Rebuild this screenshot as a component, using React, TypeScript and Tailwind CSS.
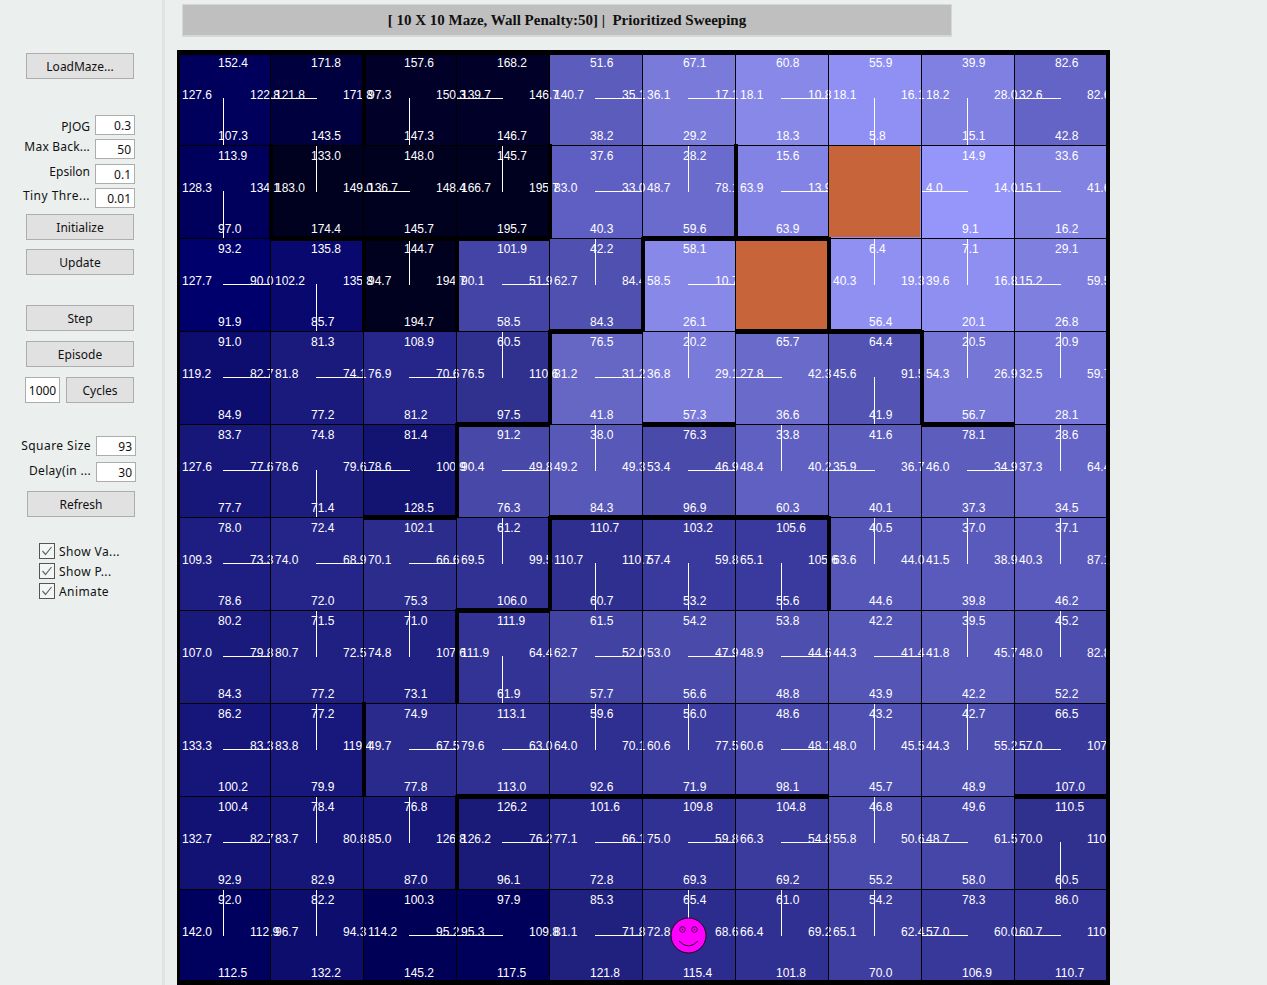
type Dir = "R" | "L" | "U" | "D"
type Cell = [string, string, string, string, Dir, string] | string

const ORANGE = "orange"

// top, left, right, bottom, policy direction, shade
const rows: Cell[][] = [
  [
    ["152.4", "127.6", "122.8", "107.3", "D", "#00005c"],
    ["171.8", "121.8", "171.8", "143.5", "L", "#00003e"],
    ["157.6", "97.3", "150.3", "147.3", "D", "#000028"],
    ["168.2", "139.7", "146.7", "146.7", "L", "#000028"],
    ["51.6", "140.7", "35.1", "38.2", "R", "#5c5cbd"],
    ["67.1", "36.1", "17.1", "29.2", "R", "#7a7adb"],
    ["60.8", "18.1", "10.8", "18.3", "R", "#8888e8"],
    ["55.9", "18.1", "16.1", "5.8", "D", "#9090f4"],
    ["39.9", "18.2", "28.0", "15.1", "D", "#8080e2"],
    ["82.6", "32.6", "82.6", "42.8", "L", "#6464c6"],
  ],
  [
    ["113.9", "128.3", "134.1", "97.0", "D", "#00005c"],
    ["133.0", "183.0", "149.0", "174.4", "U", "#00001f"],
    ["148.0", "136.7", "148.4", "145.7", "L", "#00001f"],
    ["145.7", "166.7", "195.7", "195.7", "U", "#00001f"],
    ["37.6", "83.0", "33.0", "40.3", "R", "#5f5fc3"],
    ["28.2", "48.7", "78.1", "59.6", "U", "#6b6bce"],
    ["15.6", "63.9", "13.9", "63.9", "R", "#8383e5"],
    ORANGE,
    ["14.9", "4.0", "14.0", "9.1", "L", "#9595fa"],
    ["33.6", "15.1", "41.6", "16.2", "L", "#8282e3"],
  ],
  [
    ["93.2", "127.7", "90.0", "91.9", "R", "#00006c"],
    ["135.8", "102.2", "135.8", "85.7", "D", "#08086e"],
    ["144.7", "94.7", "194.7", "194.7", "U", "#00001f"],
    ["101.9", "90.1", "51.9", "58.5", "R", "#4444a6"],
    ["42.2", "62.7", "84.4", "84.3", "U", "#5050b0"],
    ["58.1", "58.5", "10.7", "26.1", "R", "#8888e8"],
    ORANGE,
    ["6.4", "40.3", "19.3", "56.4", "U", "#9090f3"],
    ["7.1", "39.6", "16.8", "20.1", "U", "#8f8ff1"],
    ["29.1", "15.2", "59.5", "26.8", "L", "#7f7fe0"],
  ],
  [
    ["91.0", "119.2", "82.7", "84.9", "R", "#0d0d70"],
    ["81.3", "81.8", "74.1", "77.2", "R", "#1a1a7c"],
    ["108.9", "76.9", "70.6", "81.2", "R", "#25258a"],
    ["60.5", "76.5", "110.6", "97.5", "U", "#30308f"],
    ["76.5", "81.2", "31.2", "41.8", "R", "#6666c5"],
    ["20.2", "36.8", "29.1", "57.3", "U", "#7a7adb"],
    ["65.7", "27.8", "42.3", "36.6", "L", "#6a6acb"],
    ["64.4", "45.6", "91.5", "41.9", "D", "#5353b4"],
    ["20.5", "54.3", "26.9", "56.7", "U", "#7676d7"],
    ["20.9", "32.5", "59.7", "28.1", "U", "#7676d8"],
  ],
  [
    ["83.7", "127.6", "77.6", "77.7", "R", "#17177a"],
    ["74.8", "78.6", "79.6", "71.4", "D", "#1d1d80"],
    ["81.4", "78.6", "100.9", "128.5", "L", "#131372"],
    ["91.2", "90.4", "49.8", "76.3", "R", "#4848a9"],
    ["38.0", "49.2", "49.3", "84.3", "U", "#5858b9"],
    ["76.3", "53.4", "46.9", "96.9", "R", "#4a4aab"],
    ["33.8", "48.4", "40.2", "60.3", "U", "#6060c2"],
    ["41.6", "35.9", "36.7", "40.1", "L", "#5c5cbd"],
    ["78.1", "46.0", "34.9", "37.3", "R", "#5d5dbe"],
    ["28.6", "37.3", "64.4", "34.5", "U", "#6565c7"],
  ],
  [
    ["78.0", "109.3", "73.3", "78.6", "R", "#1e1e82"],
    ["72.4", "74.0", "68.9", "72.0", "R", "#252589"],
    ["102.1", "70.1", "66.6", "75.3", "R", "#2c2c8d"],
    ["61.2", "69.5", "99.5", "106.0", "U", "#313193"],
    ["110.7", "110.7", "110.7", "60.7", "D", "#2f2f90"],
    ["103.2", "57.4", "59.8", "53.2", "D", "#3a3a9e"],
    ["105.6", "65.1", "105.6", "55.6", "D", "#3a3a9e"],
    ["40.5", "63.6", "44.0", "44.6", "U", "#5656b8"],
    ["37.0", "41.5", "38.9", "39.8", "U", "#5a5abc"],
    ["37.1", "40.3", "87.1", "46.2", "U", "#5a5abc"],
  ],
  [
    ["80.2", "107.0", "79.8", "84.3", "R", "#1a1a7c"],
    ["71.5", "80.7", "72.5", "77.2", "U", "#202083"],
    ["71.0", "74.8", "107.6", "73.1", "U", "#212184"],
    ["111.9", "111.9", "64.4", "61.9", "D", "#333395"],
    ["61.5", "62.7", "52.0", "57.7", "R", "#4242a3"],
    ["54.2", "53.0", "47.9", "56.6", "R", "#4a4aab"],
    ["53.8", "48.9", "44.6", "48.8", "R", "#4e4eaf"],
    ["42.2", "44.3", "41.4", "43.9", "R", "#5555b6"],
    ["39.5", "41.8", "45.7", "42.2", "U", "#5858b9"],
    ["45.2", "48.0", "82.8", "52.2", "U", "#4d4dae"],
  ],
  [
    ["86.2", "133.3", "83.3", "100.2", "R", "#15157a"],
    ["77.2", "83.8", "119.4", "79.9", "U", "#18187c"],
    ["74.9", "49.7", "67.5", "77.8", "R", "#2a2a8c"],
    ["113.1", "79.6", "63.0", "113.0", "R", "#303092"],
    ["59.6", "64.0", "70.1", "92.6", "U", "#2f2f91"],
    ["56.0", "60.6", "77.5", "71.9", "U", "#3c3c9f"],
    ["48.6", "60.6", "48.1", "98.1", "R", "#4646a8"],
    ["43.2", "48.0", "45.5", "45.7", "U", "#5050b2"],
    ["42.7", "44.3", "55.2", "48.9", "U", "#4e4eaf"],
    ["66.5", "57.0", "107.0", "107.0", "L", "#39399c"],
  ],
  [
    ["100.4", "132.7", "82.7", "92.9", "R", "#121275"],
    ["78.4", "83.7", "80.8", "82.9", "U", "#161679"],
    ["76.8", "85.0", "126.8", "87.0", "U", "#17177a"],
    ["126.2", "126.2", "76.2", "96.1", "R", "#1a1a78"],
    ["101.6", "77.1", "66.1", "72.8", "R", "#28288a"],
    ["109.8", "75.0", "59.8", "69.3", "R", "#313193"],
    ["104.8", "66.3", "54.8", "69.2", "R", "#3b3b9d"],
    ["46.8", "55.8", "50.6", "55.2", "U", "#4a4aac"],
    ["49.6", "48.7", "61.5", "58.0", "L", "#4646a8"],
    ["110.5", "70.0", "110.5", "60.5", "D", "#30308f"],
  ],
  [
    ["92.0", "142.0", "112.9", "112.5", "U", "#00005f"],
    ["82.2", "96.7", "94.3", "132.2", "U", "#0d0d6d"],
    ["100.3", "114.2", "95.2", "145.2", "R", "#000056"],
    ["97.9", "95.3", "109.8", "117.5", "L", "#00005a"],
    ["85.3", "81.1", "71.8", "121.8", "R", "#20207f"],
    ["65.4", "72.8", "68.6", "115.4", "U", "#2c2c8e"],
    ["61.0", "66.4", "69.2", "101.8", "U", "#303092"],
    ["54.2", "65.1", "62.4", "70.0", "U", "#3e3ea0"],
    ["78.3", "57.0", "60.0", "106.9", "L", "#38389a"],
    ["86.0", "60.7", "110.7", "110.7", "L", "#333395"],
  ],
]

// walls inside the maze: [row, col] on the top edge / left edge of that cell
const topWalls = [
  [2, 1], [2, 2], [2, 3], [2, 5], [2, 6],
  [3, 4], [3, 6], [3, 7],
  [4, 3], [4, 5], [4, 8],
  [5, 2], [5, 4], [5, 5], [5, 6],
  [6, 3],
  [8, 3], [8, 4], [8, 5], [8, 6], [8, 9],
]
const leftWalls = [
  [0, 2],
  [1, 1], [1, 4], [1, 6],
  [2, 2], [2, 3], [2, 5], [2, 7],
  [3, 4], [3, 8],
  [4, 3],
  [5, 4], [5, 7],
  [6, 3],
  [7, 2],
  [8, 3],
]

const policyLine: Record<Dir, string> = {
  R: "left-[46px] top-[46px] w-[47px] h-px",
  L: "left-0 top-[46px] w-[47px] h-px",
  U: "left-[46px] top-0 w-px h-[47px]",
  D: "left-[46px] top-[46px] w-px h-[47px]",
}

function MazeCell({ cell }: { cell: Cell }) {
  if (typeof cell === "string") {
    return (
      <div className="relative h-[93px] w-[93px] bg-[#9090f3]">
        <div className="absolute left-px top-px z-10 h-[91px] w-[91px] bg-[#c8643a]" />
        <div className="absolute inset-0 z-20 border-l border-t border-black" />
      </div>
    )
  }
  const [top, left, right, bottom, dir, shade] = cell
  const num = "absolute z-10 whitespace-nowrap text-[12px] leading-[14px] text-white"
  return (
    <div className="relative h-[93px] w-[93px]" style={{ backgroundColor: shade }}>
      <span className={`${num} left-[41px] top-[4px]`}>{top}</span>
      <span className={`${num} left-[5px] top-[36px]`}>{left}</span>
      <span className={`${num} left-[73px] top-[36px]`}>{right}</span>
      <span className={`${num} left-[41px] top-[77px]`}>{bottom}</span>
      <div className={`absolute z-10 bg-white ${policyLine[dir]}`} />
      <div className="absolute inset-0 z-20 border-l border-t border-black" />
    </div>
  )
}

function Smiley() {
  return (
    <svg className="absolute left-[493px] top-[867px] z-20" width="37" height="37" viewBox="0 0 37 37">
      <circle cx="18.5" cy="18.5" r="17.5" fill="#ff00ff" stroke="#1a001a" strokeWidth="1" />
      <circle cx="12.5" cy="12.5" r="2.8" fill="none" stroke="#400040" strokeWidth="1" />
      <circle cx="12.5" cy="12.5" r="0.8" fill="#400040" />
      <circle cx="24.5" cy="12.5" r="2.8" fill="none" stroke="#400040" strokeWidth="1" />
      <circle cx="24.5" cy="12.5" r="0.8" fill="#400040" />
      <path d="M9 24 Q18.5 34 28 24" fill="none" stroke="#200020" strokeWidth="1" />
    </svg>
  )
}

function Button({ label, className }: { label: string; className: string }) {
  return (
    <div
      className={`flex h-[26px] items-center justify-center border border-[#adadad] bg-[#e1e1e1] pt-[2px] text-[12px] text-[#111] ${className}`}
    >
      {label}
    </div>
  )
}

function Field({ label, value, labelClass, className }: { label: string; value: string; labelClass: string; className: string }) {
  return (
    <div className={`flex h-[20px] items-center justify-end ${className}`}>
      <span className={`whitespace-nowrap text-[12px] text-[#111] ${labelClass}`}>{label}</span>
      <div className="ml-[5px] flex h-[20px] w-[40px] items-center justify-end border border-[#adadad] bg-white pr-[3px] pt-[2px] text-[12px] text-[#111]">
        {value}
      </div>
    </div>
  )
}

function Check({ label, className }: { label: string; className: string }) {
  return (
    <div className={`ml-[39px] flex h-[16px] items-center ${className}`}>
      <svg width="16" height="16" viewBox="0 0 16 16" className="shrink-0">
        <rect x="0.5" y="0.5" width="15" height="15" fill="#f4f6f5" stroke="#555" />
        <path d="M3.5 8 L6.5 11.5 L12.5 4" fill="none" stroke="#666" strokeWidth="1.2" />
      </svg>
      <span className="ml-[4px] whitespace-nowrap pt-[2px] text-[12px] tracking-[0.4px] text-[#111]">{label}</span>
    </div>
  )
}

function Sidebar() {
  return (
    <aside className="flex h-full w-[165px] shrink-0 flex-col border-r-[3px] border-[#e0e5e3] pt-[53px] pr-[27px]">
      <Button label="LoadMaze..." className="ml-[26px] w-[108px]" />
      <Field label="PJOG" value="0.3" labelClass="mt-[3px]" className="mt-[36px]" />
      <Field label="Max Back..." value="50" labelClass="mb-[4px] tracking-[0.2px]" className="mt-[4px]" />
      <Field label="Epsilon" value="0.1" labelClass="mb-[4px]" className="mt-[5px]" />
      <Field label="Tiny Thre..." value="0.01" labelClass="mb-[4px] tracking-[0.45px]" className="mt-[4px]" />
      <Button label="Initialize" className="ml-[26px] mt-[6px] w-[108px]" />
      <Button label="Update" className="ml-[26px] mt-[9px] w-[108px]" />
      <Button label="Step" className="ml-[26px] mt-[30px] w-[108px]" />
      <Button label="Episode" className="ml-[26px] mt-[10px] w-[108px]" />
      <div className="ml-[25px] mt-[10px] flex items-center">
        <div className="flex h-[26px] w-[35px] items-center justify-center border border-[#adadad] bg-white pt-[2px] text-[12px] text-[#111]">
          1000
        </div>
        <Button label="Cycles" className="ml-[6px] w-[68px]" />
      </div>
      <Field label="Square Size" value="93" labelClass="tracking-[0.45px]" className="-mr-[1px] mt-[33px]" />
      <Field label="Delay(in ..." value="30" labelClass="mb-[2px] tracking-[0.3px]" className="-mr-[1px] mt-[6px]" />
      <Button label="Refresh" className="ml-[27px] mt-[9px] w-[108px]" />
      <Check label="Show Va..." className="mt-[26px]" />
      <Check label="Show P..." className="mt-[4px]" />
      <Check label="Animate" className="mt-[4px]" />
    </aside>
  )
}

function Maze() {
  return (
    <div className="relative ml-[12px] mt-[13px] h-[935px] w-[933px] overflow-hidden pt-[2px]">
      <div className="grid grid-cols-[repeat(10,93px)] font-['Liberation_Sans',sans-serif]">
        {rows.map((row, r) => row.map((cell, c) => <MazeCell key={`${r}-${c}`} cell={cell} />))}
      </div>
      {topWalls.map(([r, c]) => (
        <div
          key={`t${r}-${c}`}
          className="absolute z-30 h-[5px] w-[94px] bg-black"
          style={{ left: 93 * c, top: 93 * r }}
        />
      ))}
      {leftWalls.map(([r, c]) => (
        <div
          key={`l${r}-${c}`}
          className="absolute z-30 h-[95px] w-[4px] bg-black"
          style={{ left: 93 * c - 1, top: 93 * r + 1 }}
        />
      ))}
      <div className="absolute left-0 right-0 top-0 z-30 h-[5px] bg-black" />
      <div className="absolute bottom-0 left-0 right-0 z-30 h-[5px] bg-black" />
      <div className="absolute bottom-0 left-0 top-0 z-30 w-[3px] bg-black" />
      <div className="absolute bottom-0 right-0 top-0 z-30 w-[4px] bg-black" />
      <Smiley />
    </div>
  )
}

export default function App() {
  return (
    <div className="flex h-[985px] w-[1267px] overflow-hidden bg-[#ebf0ee] font-['Noto_Sans',sans-serif]">
      <Sidebar />
      <main className="flex flex-col">
        <div className="ml-[17px] mt-[4px] flex h-[33px] w-[770px] items-center justify-center border border-[#d4d8d6] border-b-2 bg-[#bfbfbf] font-['Liberation_Serif',serif] text-[15px] font-bold whitespace-pre text-[#111]">
          {"[ 10 X 10 Maze, Wall Penalty:50] |  Prioritized Sweeping"}
        </div>
        <Maze />
      </main>
    </div>
  )
}
